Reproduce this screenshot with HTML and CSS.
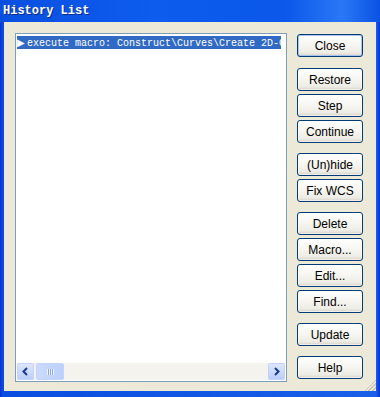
FILE: index.html
```html
<!DOCTYPE html>
<html>
<head>
<meta charset="utf-8">
<link rel="stylesheet" href="styles.css">
</head>
<body>
<div class="window">
  <div class="titlebar"><span class="title">History List</span></div>
  <div class="client">
    <div class="listbox">
      <div class="items">
        <div class="item selected"><span class="tri">&#9654;</span>execute macro: Construct\Curves\Create 2D-Curve</div>
      </div>
      <div class="hscroll">
        <div class="sbtn"><svg width="15" height="15" viewBox="0 0 15 15"><path d="M9 4 L5.5 7.5 L9 11" fill="none" stroke="#1c3a8c" stroke-width="2"/></svg></div>
        <div class="thumb"><span class="grip"></span></div>
        <div class="track"></div>
        <div class="sbtn"><svg width="15" height="15" viewBox="0 0 15 15"><path d="M6 4 L9.5 7.5 L6 11" fill="none" stroke="#1c3a8c" stroke-width="2"/></svg></div>
      </div>
    </div>
    <div class="buttons">
      <button class="btn default">Close</button>
      <div class="group">
        <button class="btn">Restore</button>
        <button class="btn">Step</button>
        <button class="btn">Continue</button>
      </div>
      <div class="group">
        <button class="btn">(Un)hide</button>
        <button class="btn">Fix WCS</button>
      </div>
      <div class="group">
        <button class="btn">Delete</button>
        <button class="btn">Macro...</button>
        <button class="btn">Edit...</button>
        <button class="btn">Find...</button>
      </div>
      <button class="btn">Update</button>
      <button class="btn">Help</button>
    </div>
    <div class="grip-corner"></div>
  </div>
</div>
</body>
</html>
```
FILE: styles.css
```css
html, body { margin: 0; padding: 0; }
body { width: 380px; height: 397px; overflow: hidden; background: #0a3fc8; }
.window {
  width: 380px; height: 397px; display: flex; flex-direction: column;
  background: linear-gradient(to right, #0831d9, #0a4ee0 3px, #1a5fe8 376px, #0831d9);
  box-sizing: border-box;
}
.titlebar {
  height: 22px; flex: none; display: flex; align-items: center; padding-left: 3px;
  background: linear-gradient(to right, #0a4fe0 0%, #0d5cee 40%, #0b58ea 75%, #2a78f6 90%, #0a52e4 100%);
}
.title {
  font-family: "Liberation Mono", "DejaVu Sans Mono", monospace; font-weight: bold;
  font-size: 12px; color: #fff; text-shadow: 1px 1px 0 #0a2a8a;
}
.client {
  position: relative;
  flex: 1; margin: 0 4px 6px 4px; background: #ece9d8;
  display: flex; padding: 11px 0 0 11px; gap: 10px;
}
.listbox {
  width: 272px; height: 349px; box-sizing: border-box; border: 1px solid #7f9db9;
  background: #fff; display: flex; flex-direction: column; padding: 2px 1px 1px 1px;
}
.items { flex: 1; overflow: hidden; }
.item {
  font-family: "Liberation Mono", "DejaVu Sans Mono", monospace; font-size: 10px;
  height: 13px; line-height: 13px; white-space: nowrap; overflow: hidden; color: #000;
  width: 264px;
}
.item.selected { background: #316ac5; color: #fff; }
.tri { font-family: "DejaVu Sans", sans-serif; font-size: 10px; display: inline-block; width: 10px; }
.hscroll { height: 17px; display: flex; background: #f4f3ee; }
.sbtn {
  width: 17px; height: 17px; box-sizing: border-box; border: 1px solid #c3d3fd; border-radius: 2px;
  background: linear-gradient(to bottom, #dce6fd, #bccff9); display: flex; align-items: center; justify-content: center;
}
.thumb {
  width: 28px; height: 17px; box-sizing: border-box; margin-left: 2px; border: 1px solid #c3d3fd; border-radius: 2px;
  background: linear-gradient(to right, #cbdafc, #bcd0fb); display: flex; align-items: center; justify-content: center;
}
.grip { width: 7px; height: 6px; background: repeating-linear-gradient(to right, #eef3fe 0 1px, #8aa8e8 1px 2px); }
.track { flex: 1; }
.buttons { display: flex; flex-direction: column; gap: 10px; padding-top: 1px; }
.group { display: flex; flex-direction: column; gap: 3px; }
.buttons > .btn.default { margin-bottom: 1px; }
.btn {
  width: 66px; height: 23px; box-sizing: border-box; border: 1px solid #003c74; border-radius: 3px;
  background: linear-gradient(to bottom, #ffffff 0%, #f6f5f0 50%, #ecebe4 85%, #d6d0c5 100%);
  font-family: "Liberation Sans", Tahoma, sans-serif; font-weight: normal; font-size: 12px; color: #000; padding: 0;
  box-shadow: inset 0 0 0 1px rgba(255,255,255,0.6);
}
.btn.default { box-shadow: inset 0 0 0 1px #a9c3f0; }
.grip-corner {
  position: absolute; right: 0; bottom: 0; width: 12px; height: 12px;
  background: linear-gradient(135deg, transparent 50%, #c8c4b4 50% 58%, transparent 58% 66%, #c8c4b4 66% 74%, transparent 74% 82%, #c8c4b4 82% 90%, transparent 90%);
}
```
